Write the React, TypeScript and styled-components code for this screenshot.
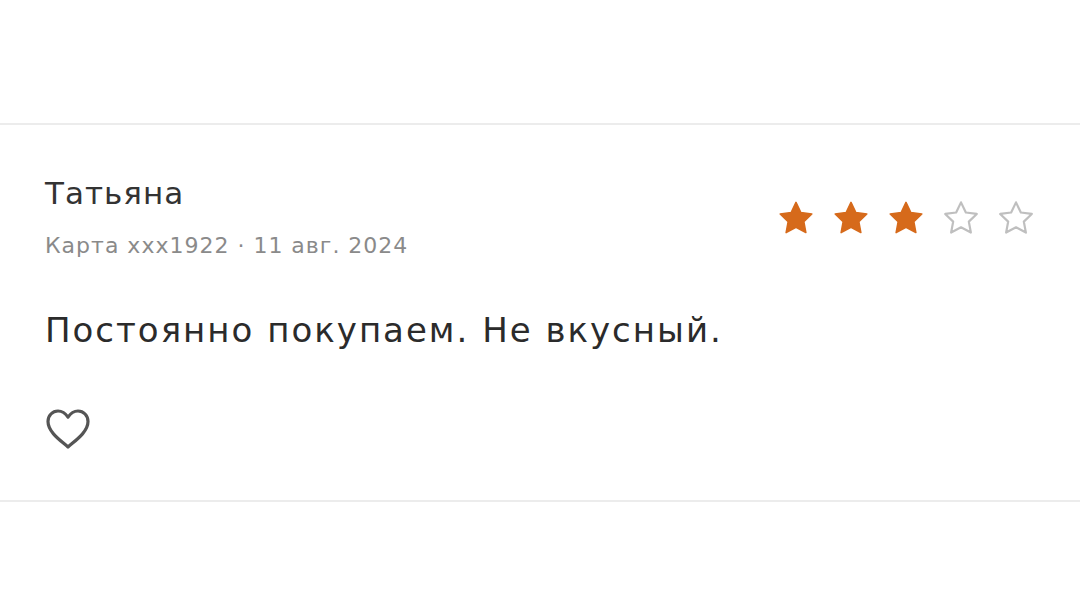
import React from 'react';
import styled, {createGlobalStyle} from 'styled-components';

const GlobalStyle = createGlobalStyle`
  html, body {
    margin: 0;
    padding: 0;
    background: #fff;
  }
  body {
    font-family: "DejaVu Sans", "Noto Sans", sans-serif;
    color: #333;
  }
`;

const Page = styled.div`
  width: 1080px;
  height: 610px;
  padding-top: 123px;
  box-sizing: border-box;
`;
const Review = styled.div`
  border-top: 2px solid #ececec;
  border-bottom: 2px solid #ececec;
  padding: 50px 45px 50px 45px;
`;
const Header = styled.div`
  display: flex;
  justify-content: space-between;
  align-items: center;
`;
const Author = styled.div`
  display: flex;
  flex-direction: column;
`;
const Name = styled.div`
  font-size: 31px;
  line-height: 36px;
  letter-spacing: 1px;
  color: #333;
`;
const Meta = styled.div`
  margin-top: 21px;
  font-size: 22px;
  line-height: 28px;
  letter-spacing: 1px;
  color: #8a8a8a;
`;
const Stars = styled.div`
  display: flex;
  gap: 17px;
`;
const Text = styled.p`
  margin: 50px 0 0;
  font-size: 34px;
  line-height: 40px;
  letter-spacing: 2px;
  color: #2b2b2b;
`;
const LikeButton = styled.button`
  display: block;
  margin-top: 58px;
  padding: 0;
  border: none;
  background: none;
  width: 46px;
  height: 42px;
  color: #555;
`;

const Star = ({filled}: {filled: boolean}) => (
    <svg width="38" height="36" viewBox="0 0 24 23">
        <path
            d="M12 1.5l3.1 6.5 7 .9-5.1 4.9 1.3 7L12 17.4l-6.3 3.4 1.3-7L1.9 8.9l7-.9z"
            fill={filled ? '#d66a1b' : 'none'}
            stroke={filled ? '#d66a1b' : '#bfbfbf'}
            strokeWidth={filled ? 1 : 1.4}
            strokeLinejoin="round"
        />
    </svg>
);

const Heart = () => (
    <svg width="46" height="42" viewBox="0 0 46 42" fill="none">
        <path
            d="M23 39C17 33.5 3 24.5 3 13.5 3 7.5 7.5 3 13 3c4.3 0 7.6 2.6 10 6.2C25.4 5.6 28.7 3 33 3c5.5 0 10 4.5 10 10.5C43 24.5 29 33.5 23 39z"
            stroke="currentColor"
            strokeWidth="3.2"
            strokeLinejoin="round"
        />
    </svg>
);

const App = () => {
    const rating = 3

    return (
        <Page>
            <GlobalStyle/>
            <Review>
                <Header>
                    <Author>
                        <Name>Татьяна</Name>
                        <Meta>Карта xxx1922 · 11 авг. 2024</Meta>
                    </Author>
                    <Stars>
                        {[1, 2, 3, 4, 5].map((n) => (
                            <Star key={n} filled={n <= rating}/>
                        ))}
                    </Stars>
                </Header>
                <Text>Постоянно покупаем. Не вкусный.</Text>
                <LikeButton><Heart/></LikeButton>
            </Review>
        </Page>
    );
}

export default App;
